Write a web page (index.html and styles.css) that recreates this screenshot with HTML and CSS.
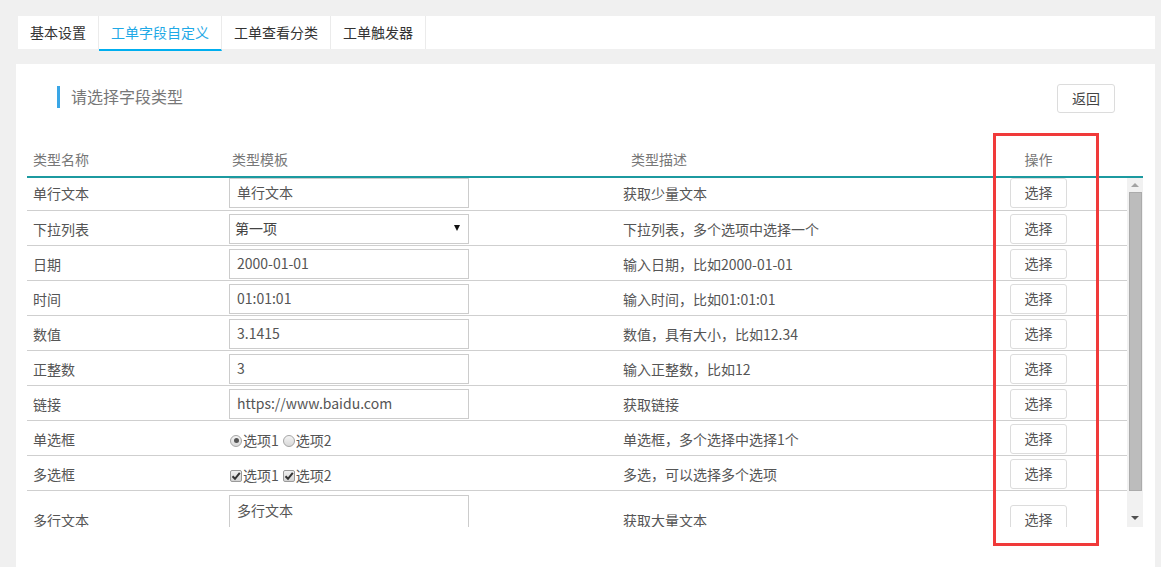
FILE: index.html
```html
<!DOCTYPE html>
<html lang="zh-CN">
<head>
<meta charset="utf-8">
<title>工单字段自定义</title>
<link rel="stylesheet" href="styles.css">
</head>
<body>
<div class="tabs">
  <div class="tab">基本设置</div>
  <div class="tab active">工单字段自定义</div>
  <div class="tab">工单查看分类</div>
  <div class="tab">工单触发器</div>
</div>
<div class="panel">
  <div class="title-row">
    <div class="title">请选择字段类型</div>
    <button class="btn btn-back">返回</button>
  </div>
  <div class="table">
    <div class="thead">
      <div class="th c1">类型名称</div>
      <div class="th">类型模板</div>
      <div class="th">类型描述</div>
      <div class="th center">操作</div>
      <div class="th"></div>
    </div>
    <div class="tbody">
      <div class="rows">
        <div class="row first">
          <div class="c1">单行文本</div>
          <div><div class="field">单行文本</div></div>
          <div>获取少量文本</div>
          <div><button class="btn">选择</button></div>
        </div>
        <div class="row">
          <div class="c1">下拉列表</div>
          <div><div class="field select"><span>第一项</span><span class="caret"></span></div></div>
          <div>下拉列表，多个选项中选择一个</div>
          <div><button class="btn">选择</button></div>
        </div>
        <div class="row">
          <div class="c1">日期</div>
          <div><div class="field">2000-01-01</div></div>
          <div>输入日期，比如2000-01-01</div>
          <div><button class="btn">选择</button></div>
        </div>
        <div class="row">
          <div class="c1">时间</div>
          <div><div class="field">01:01:01</div></div>
          <div>输入时间，比如01:01:01</div>
          <div><button class="btn">选择</button></div>
        </div>
        <div class="row">
          <div class="c1">数值</div>
          <div><div class="field">3.1415</div></div>
          <div>数值，具有大小，比如12.34</div>
          <div><button class="btn">选择</button></div>
        </div>
        <div class="row">
          <div class="c1">正整数</div>
          <div><div class="field">3</div></div>
          <div>输入正整数，比如12</div>
          <div><button class="btn">选择</button></div>
        </div>
        <div class="row">
          <div class="c1">链接</div>
          <div><div class="field">https://www.baidu.com</div></div>
          <div>获取链接</div>
          <div><button class="btn">选择</button></div>
        </div>
        <div class="row">
          <div class="c1">单选框</div>
          <div class="opts"><span class="radio on"></span><span class="lbl">选项1</span><span class="radio"></span><span class="lbl">选项2</span></div>
          <div>单选框，多个选择中选择1个</div>
          <div><button class="btn">选择</button></div>
        </div>
        <div class="row">
          <div class="c1">多选框</div>
          <div class="opts"><span class="check"><svg width="10" height="10" viewBox="0 0 10 10"><path d="M1.5 5.2 L4 7.8 L8.8 1.8" fill="none" stroke="#333" stroke-width="2"/></svg></span><span class="lbl">选项1</span><span class="check"><svg width="10" height="10" viewBox="0 0 10 10"><path d="M1.5 5.2 L4 7.8 L8.8 1.8" fill="none" stroke="#333" stroke-width="2"/></svg></span><span class="lbl">选项2</span></div>
          <div>多选，可以选择多个选项</div>
          <div><button class="btn">选择</button></div>
        </div>
        <div class="row last">
          <div class="c1">多行文本</div>
          <div><div class="field area">多行文本</div></div>
          <div>获取大量文本</div>
          <div><button class="btn">选择</button></div>
        </div>
      </div>
      <div class="scrollbar">
        <div class="sb-btn up"></div>
        <div class="sb-thumb"></div>
        <div class="sb-space"></div>
        <div class="sb-btn down"></div>
      </div>
    </div>
  </div>
</div>
<div class="highlight"></div>
</body>
</html>
```
FILE: styles.css
```css
* { box-sizing: border-box; }
html, body { margin: 0; padding: 0; }
body {
  background: #f0f0f0;
  font-family: "Noto Sans CJK SC", "Microsoft YaHei", sans-serif;
  font-size: 14px;
  color: #555;
  height: 567px;
  overflow: hidden;
}
.tabs {
  margin: 16px 6px 0 18px;
  height: 33px;
  background: #fff;
  display: flex;
  align-items: flex-start;
}
.tab {
  padding: 0 12px;
  height: 33px;
  line-height: 33px;
  border-right: 1px solid #ebebeb;
  color: #333;
}
.tab.active {
  color: #1fa9e6;
  height: 35px;
  border-bottom: 2px solid #00aeef;
}
.panel {
  margin: 15px 6px 0 16px;
  background: #fff;
  height: 520px;
}
.title-row {
  display: flex;
  justify-content: space-between;
  align-items: flex-start;
  padding: 20px 40px 0 41px;
}
.title {
  margin-top: 2px;
  border-left: 3px solid #3aa6e6;
  padding-left: 11px;
  height: 22px;
  line-height: 21px;
  font-size: 16px;
  color: #777;
}
.btn {
  font-family: inherit;
  font-size: 14px;
  color: #555;
  background: #fff;
  border: 1px solid #dcdcdc;
  border-radius: 3px;
  width: 57px;
  height: 30px;
  padding: 0;
  line-height: 27px;
}
.btn-back {
  width: 58px;
  height: 29px;
  color: #444;
}
.table {
  margin: 31px 0 0 11px;
  width: 1116px;
}
.thead {
  display: grid;
  grid-template-columns: 205px 399px 379px 57px 1fr;
  height: 34px;
  line-height: 31px;
  border-bottom: 2px solid #1c9aa0;
  color: #777;
}
.th.c1 { padding-left: 6px; }
.th.center { text-align: center; }
.tbody {
  display: flex;
  height: 349px;
}
.rows {
  width: 1100px;
  overflow: hidden;
}
.row {
  display: grid;
  grid-template-columns: 202px 394px 387px 117px;
  grid-auto-rows: 30px;
  align-items: center;
  padding: 3px 0 1px;
  border-bottom: 1px solid #cfcfcf;
  line-height: 20px;
}
.row > div { padding-bottom: 1px; }
.row.first { padding: 0 0 2px; }
.row.last { grid-auto-rows: 48px; padding: 5px 0 5px; }
.c1 { padding-left: 6px; }
.field {
  width: 240px;
  height: 30px;
  border: 1px solid #cccccc;
  padding: 0 7px;
  line-height: 27px;
  color: #555;
}
.field.select {
  display: flex;
  justify-content: space-between;
  align-items: center;
  padding: 0 8px 0 5px;
  color: #444;
}
.caret {
  width: 0;
  height: 0;
  border-left: 3px solid transparent;
  border-right: 3px solid transparent;
  border-top: 6px solid #111;
  margin-top: -2px;
}
.field.area {
  height: 50px;
  line-height: 20px;
  padding-top: 4px;
}
.opts {
  display: flex;
  align-items: center;
  padding-top: 2px;
}
.lbl { margin-right: 3px; }
.radio {
  width: 12px;
  height: 12px;
  border-radius: 50%;
  border: 1px solid #a5a5a5;
  background: linear-gradient(#f4f4f4, #d8d8d8);
  margin: 2px 1px 0 1px;
  display: flex;
  align-items: center;
  justify-content: center;
}
.radio.on::before {
  content: "";
  width: 5px;
  height: 5px;
  border-radius: 50%;
  background: #555;
}
.check {
  width: 12px;
  height: 12px;
  border: 1px solid #9a9a9a;
  border-radius: 2px;
  background: linear-gradient(#f0f0f0, #d4d4d4);
  margin: 3px 1px 0 1px;
  display: flex;
  align-items: center;
  justify-content: center;
}
.scrollbar {
  width: 16px;
  background: #f1f1f1;
  display: flex;
  flex-direction: column;
  align-items: center;
}
.sb-btn {
  width: 16px;
  display: flex;
  align-items: center;
  justify-content: center;
}
.sb-btn.up { height: 14px; }
.sb-btn.down { height: 18px; }
.sb-btn.up::before {
  content: "";
  border-left: 4px solid transparent;
  border-right: 4px solid transparent;
  border-bottom: 4px solid #a3a3a3;
}
.sb-btn.down::before {
  content: "";
  border-left: 4px solid transparent;
  border-right: 4px solid transparent;
  border-top: 4px solid #505050;
}
.sb-thumb {
  width: 13px;
  height: 299px;
  background: #bcbcbc;
  border: 1px solid #ababab;
}
.sb-space { flex: 1; }
.highlight {
  position: absolute;
  left: 993px;
  top: 133px;
  width: 106px;
  height: 413px;
  border: 3px solid #f03a3a;
}
```
